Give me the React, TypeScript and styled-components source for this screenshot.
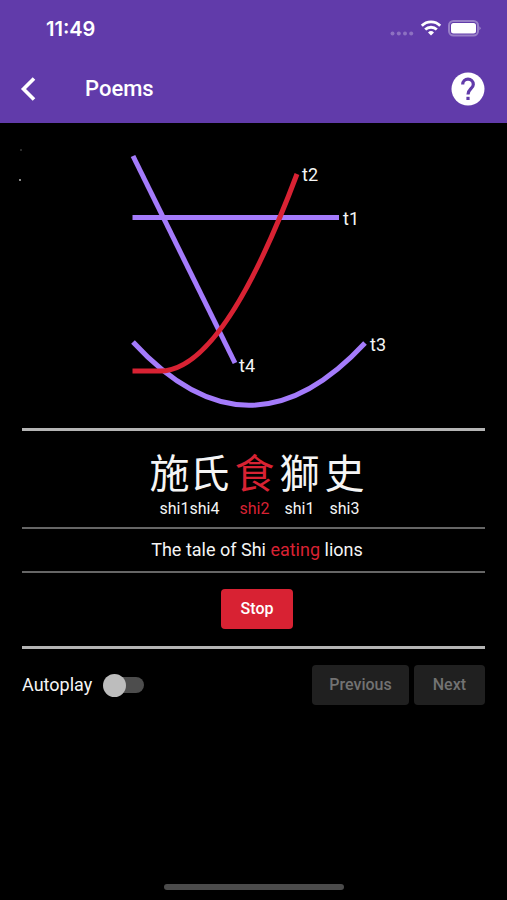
import React, { useState } from "react";
import styled, { createGlobalStyle } from "styled-components";

const VIOLET = "#a47bfb";
const RED = "#d82233";

const GlobalStyle = createGlobalStyle`
  *, *::before, *::after { box-sizing: border-box; }
  body { margin: 0; background: #000; }
`;

const Screen = styled.div`
  min-height: 100vh;
  display: flex;
  flex-direction: column;
  background: #000;
  color: #f5f5f5;
  font-family: Roboto, "Liberation Sans", sans-serif;
`;

const Header = styled.header`
  background: #613baa;
  color: #fff;
`;

const StatusBar = styled.div`
  display: flex;
  align-items: center;
  justify-content: space-between;
  height: 55px;
  padding: 2px 26px 0 46px;
`;

const Clock = styled.time`
  font-family: Inter, sans-serif;
  font-size: 20px;
  line-height: 24px;
  font-weight: 600;
`;

const StatusIcons = styled.svg`
  display: block;
  width: 92px;
  height: 20px;
`;

const AppBar = styled.div`
  display: flex;
  align-items: center;
  height: 68px;
  padding: 0 19px 0 8px;
`;

const IconButton = styled.button`
  display: grid;
  place-items: center;
  width: 40px;
  height: 40px;
  padding: 0;
  border: 0;
  background: none;
  color: inherit;
  cursor: pointer;
`;

const HelpButton = styled(IconButton)`
  margin-left: auto;
`;

const Title = styled.h1`
  margin: 0 0 0 37px;
  font-size: 22px;
  line-height: 28px;
  font-weight: 500;
`;

const Content = styled.main`
  padding: 0 22px;
`;

const Chart = styled.svg`
  display: block;
  width: 100%;
  overflow: visible;
`;

const Tone = styled.path<{ $active?: boolean }>`
  fill: none;
  stroke: ${(p) => (p.$active ? RED : VIOLET)};
  stroke-width: 5px;
`;

const ToneLabel = styled.text`
  fill: #f5f5f5;
  font-size: 18px;
`;

const Section = styled.section<{ $strong?: boolean }>`
  display: flex;
  justify-content: center;
  padding-left: 7px;
  border-top: ${(p) => (p.$strong ? "3px solid #b4b4b4" : "2px solid #666")};
`;

const Verse = styled(Section)`
  gap: 5px;
  padding-top: 12px;
  padding-bottom: 8px;
`;

const Word = styled.div<{ $active?: boolean }>`
  display: flex;
  flex-direction: column;
  align-items: center;
  color: ${(p) => (p.$active ? RED : "inherit")};
`;

const Hanzi = styled.span`
  font-family: "Noto Sans CJK TC", sans-serif;
  font-size: 40px;
  line-height: 56px;
`;

const Pinyin = styled.span`
  font-size: 16px;
  line-height: 20px;
`;

const Translation = styled(Section)`
  padding-top: 9px;
  padding-bottom: 9px;
  font-size: 18px;
  line-height: 24px;
`;

const Highlight = styled.span`
  color: ${RED};
`;

const Playback = styled(Section)`
  padding-top: 16px;
  padding-bottom: 17px;
`;

const Button = styled.button`
  height: 40px;
  padding: 0 19px;
  border: 0;
  border-radius: 4px;
  background: ${RED};
  color: #fff;
  font: 500 16px/24px Roboto, "Liberation Sans", sans-serif;
  cursor: pointer;

  &:disabled {
    background: #202020;
    color: #727272;
    cursor: default;
  }
`;

const StopButton = styled(Button)`
  padding: 0 20px;
`;

const Controls = styled.div`
  display: flex;
  align-items: center;
  justify-content: space-between;
  padding-top: 16px;
  border-top: 3px solid #b4b4b4;
`;

const AutoplayLabel = styled.label`
  display: flex;
  align-items: center;
  gap: 11px;
  font-size: 18px;
  line-height: 24px;
`;

const Switch = styled.input`
  appearance: none;
  display: grid;
  align-items: center;
  width: 41px;
  height: 23px;
  margin: 0;
  cursor: pointer;

  &::before,
  &::after {
    content: "";
    grid-area: 1 / 1;
  }

  &::before {
    height: 16px;
    margin-left: 3px;
    border-radius: 8px;
    background: #4d4d4d;
  }

  &::after {
    width: 23px;
    height: 23px;
    border-radius: 50%;
    background: #bdbdbd;
  }

  &:checked::after {
    justify-self: end;
    background: ${VIOLET};
  }
`;

const Pager = styled.nav`
  display: flex;
  gap: 5px;
`;

const PreviousButton = styled(Button)`
  padding: 0 17px;
`;

const HomeIndicator = styled.div`
  align-self: center;
  width: 180px;
  height: 6px;
  margin: auto 0 10px;
  border-radius: 3px;
  background: #4b4b4b;
`;

const words = [
  { hanzi: "施氏", pinyin: "shi1shi4" },
  { hanzi: "食", pinyin: "shi2", active: true },
  { hanzi: "獅", pinyin: "shi1" },
  { hanzi: "史", pinyin: "shi3" },
];

function ToneChart() {
  return (
    <Chart viewBox="0 0 463 305" role="img" aria-label="Tone contours">
      <circle cx="-1" cy="27" r="0.7" fill="#777" />
      <circle cx="-2" cy="57" r="0.9" fill="#ccc" />
      <Tone d="M111 33 L213 240" />
      <Tone d="M110.5 94.5 H317" />
      <Tone d="M111 219 Q227 345 343 220" />
      <Tone $active d="M110.5 248 H138 Q201 248 275 51" />
      <ToneLabel x="280" y="58">t2</ToneLabel>
      <ToneLabel x="321" y="102">t1</ToneLabel>
      <ToneLabel x="348" y="228">t3</ToneLabel>
      <ToneLabel x="217" y="249">t4</ToneLabel>
    </Chart>
  );
}

export default function App() {
  const [autoplay, setAutoplay] = useState(false);

  return (
    <Screen>
      <GlobalStyle />
      <Header>
        <StatusBar>
          <Clock>11:49</Clock>
          <StatusIcons viewBox="0 0 92 20" aria-hidden="true">
            <g fill="#fff" fillOpacity="0.28">
              <circle cx="3.5" cy="14.5" r="2" />
              <circle cx="9.8" cy="14.5" r="2" />
              <circle cx="16" cy="14.5" r="2" />
              <circle cx="22.2" cy="14.5" r="2" />
            </g>
            <g fill="none" stroke="#fff" strokeWidth="2.8">
              <path d="M32.8 6.7 A13 13 0 0 1 51.2 6.7" />
              <path d="M36.2 10.6 A8.3 8.3 0 0 1 47.8 10.6" />
            </g>
            <path d="M42 16.4 L39 13.4 A4.4 4.4 0 0 1 45 13.4 Z" fill="#fff" />
            <rect x="60" y="2" width="29" height="14.5" rx="4.5" fill="none" stroke="#fff" strokeOpacity="0.35" strokeWidth="2" />
            <rect x="62" y="4" width="25" height="10.5" rx="2.5" fill="#fff" />
            <path d="M90.5 7.2 Q92.5 9.2 90.5 11.2 Z" fill="#fff" fillOpacity="0.5" />
          </StatusIcons>
        </StatusBar>
        <AppBar>
          <IconButton type="button" aria-label="Back">
            <svg width="16" height="26" viewBox="0 0 16 26">
              <path d="M14 2.5 L3.5 13 L14 23.5" fill="none" stroke="#fff" strokeWidth="3.6" />
            </svg>
          </IconButton>
          <Title>Poems</Title>
          <HelpButton type="button" aria-label="Help">
            <svg width="40" height="40" viewBox="0 0 40 40">
              <circle cx="20" cy="20" r="16.5" fill="#fff" />
              <path
                d="M14.7 15.4 A5.3 5.3 0 0 1 25.3 15.4 C25.3 19.4 20 20.2 20 25.4"
                fill="none"
                stroke="#613baa"
                strokeWidth="3.2"
              />
              <rect x="18.4" y="27.8" width="3.2" height="3.2" fill="#613baa" />
            </svg>
          </HelpButton>
        </AppBar>
      </Header>

      <Content>
        <ToneChart />
        <Verse $strong lang="zh-Hant">
          {words.map((word) => (
            <Word key={word.hanzi} $active={word.active}>
              <Hanzi>{word.hanzi}</Hanzi>
              <Pinyin>{word.pinyin}</Pinyin>
            </Word>
          ))}
        </Verse>
        <Translation>
          <span>
            The tale of Shi <Highlight>eating</Highlight> lions
          </span>
        </Translation>
        <Playback>
          <StopButton type="button">Stop</StopButton>
        </Playback>
        <Controls>
          <AutoplayLabel>
            Autoplay
            <Switch
              type="checkbox"
              role="switch"
              checked={autoplay}
              onChange={(event) => setAutoplay(event.target.checked)}
            />
          </AutoplayLabel>
          <Pager aria-label="Verses">
            <PreviousButton type="button" disabled>Previous</PreviousButton>
            <Button type="button" disabled>Next</Button>
          </Pager>
        </Controls>
      </Content>
      <HomeIndicator />
    </Screen>
  );
}
